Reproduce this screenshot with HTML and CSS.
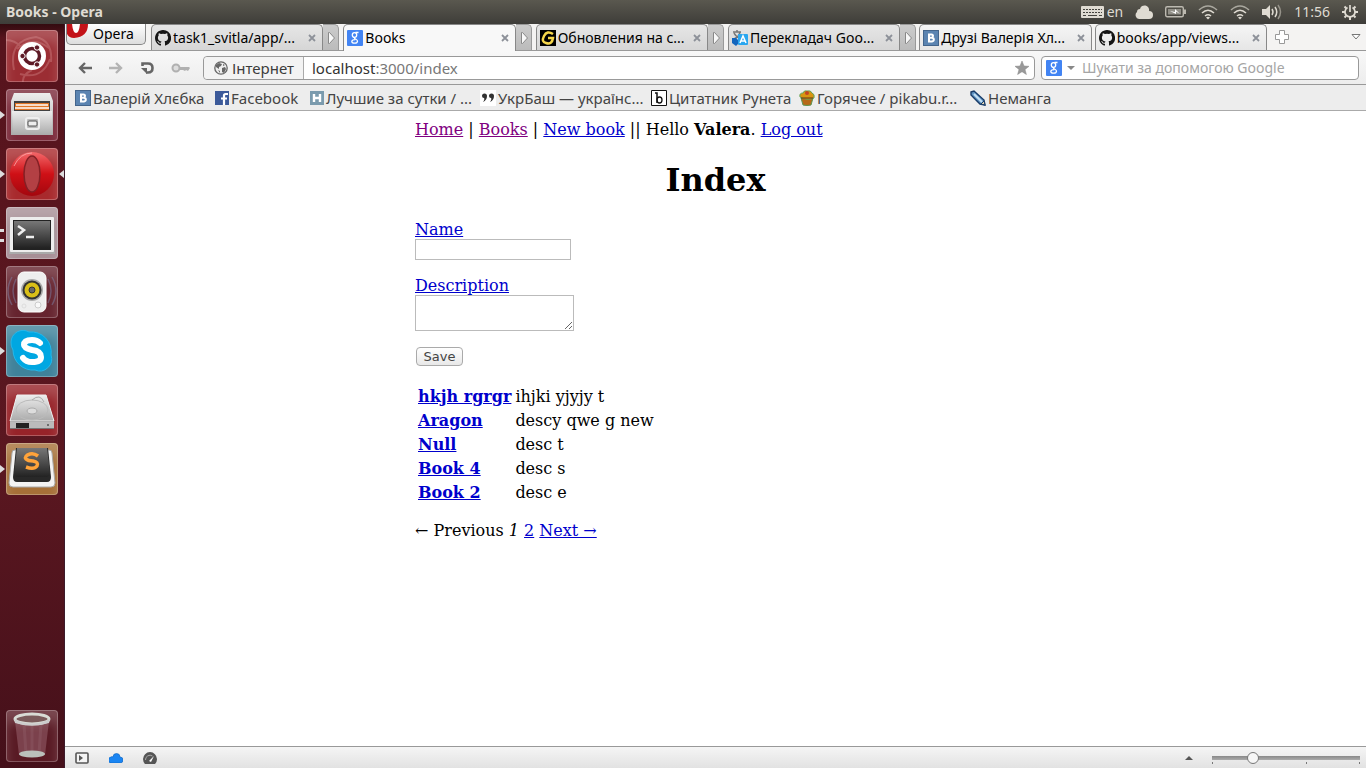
FILE: index.html
```html
<!DOCTYPE html>
<html lang="uk">
<head>
<meta charset="utf-8">
<title>Books</title>
<link rel="stylesheet" href="styles.css">
</head>
<body>
<svg class="defs" width="0" height="0" aria-hidden="true">
  <defs>
    <symbol id="github" viewBox="0 0 16 16"><path fill="#151515" d="M8 0C3.6 0 0 3.6 0 8c0 3.600 2.300 6.600 5.500 7.600.4.1.5-.2.5-.4v-1.500c-2.200.5-2.700-.9-2.700-.9-.4-.9-.9-1.200-.9-1.200-.7-.5.1-.5.1-.5.8.1 1.200.8 1.200.8.7 1.200 1.900.9 2.300.7.1-.5.3-.9.5-1.100C4.700 11.300 2.900 10.600 2.900 7.600c0-.9.300-1.600.8-2.200-.1-.2-.3-1 .1-2.100 0 0 .7-.2 2.200.8a8 8 0 0 1 4 0c1.500-1 2.200-.8 2.200-.8.4 1.100.2 1.900.1 2.100.5.600.8 1.300.8 2.200 0 3-1.900 3.700-3.600 3.900.3.300.5.700.5 1.500v2.200c0 .2.100.5.600.4A8 8 0 0 0 8 0z"/></symbol>
    <symbol id="google" viewBox="0 0 16 16"><rect width="16" height="16" rx="1" fill="#4284f3"/><g fill="none" stroke="#fff" stroke-width="1.300"><ellipse cx="7.500" cy="5" rx="2.200" ry="2.400"/><path d="M8.500 2.500h3M8 7.500c-2 1.200 2.700 1.500 2.500 3.700-.2 2.600-5.600 2.600-5.700.3 0-1.500 1.800-1.900 3.500-1.900"/></g></symbol>
    <symbol id="vk" viewBox="0 0 16 16"><rect x=".5" y=".5" width="15" height="15" fill="#5b84b1" stroke="#43658c"/><path fill="none" stroke="#fff" stroke-width="2" d="M6 4.500v7M5 4.500h3.500q1.500 0 1.500 1.500t-1.500 1.700H6h3q1.800.2 1.800 1.900T9 11.500H5"/></symbol>
    <symbol id="group" viewBox="0 0 16 26"><path d="M5.500 7.500v11h1l5-5.500-5-5.500z" fill="#f8f8f8" stroke="#888"/></symbol>
    <symbol id="close" viewBox="0 0 8 8"><path d="M1 1l6 6M7 1L1 7" stroke="#8d9199" stroke-width="1.800"/></symbol>
    <symbol id="wifi" viewBox="0 0 20 16"><g fill="none" stroke-width="1.600"><path d="M1 6Q10-2 19 6" stroke="#aaa89f"/><path d="M4 9Q10 3.500 16 9M7 12q3-2.500 6 0" stroke="#dfdbd2"/></g><path d="M8 13.500q2-1.600 4 0L10 15.500z" fill="#dfdbd2"/></symbol>
    <linearGradient id="silver" x2="0" y2="1"><stop stop-color="#ededed"/><stop offset="1" stop-color="#aaa"/></linearGradient>
    <linearGradient id="dark" x2="0" y2="1"><stop stop-color="#777"/><stop offset="1" stop-color="#222"/></linearGradient>
    <linearGradient id="red" x2="0" y2="1"><stop stop-color="#f4686a"/><stop offset=".5" stop-color="#cf1016"/><stop offset="1" stop-color="#a3070e"/></linearGradient>
  </defs>
</svg>

<header class="panel">
  <span class="panel-title">Books - Opera</span>
  <div class="indicators">
    <span class="lang"><svg width="23" height="14" viewBox="0 0 23 14"><rect y="1" width="23" height="12" rx="1" fill="#dfdbd2"/><path d="M2 4.500h19M2 7.500h19" stroke="#45443f" stroke-width="1.200" stroke-dasharray="2 1"/><path d="M2 10.500h3m2 0h9m2 0h3" stroke="#45443f" stroke-width="1.200"/></svg>en</span>
    <svg width="18" height="14" viewBox="0 0 18 14"><path fill="#dfdbd2" d="M4 14a4 4 0 0 1-2-7 3 3 0 0 1 3-3 4.500 4.500 0 0 1 9 2 4 4 0 0 1 0 8z"/></svg>
    <svg width="21" height="14" viewBox="0 0 21 14"><rect x=".7" y="1.700" width="17.600" height="10" rx="1.500" fill="none" stroke="#bcb9b0" stroke-width="1.400"/><rect x="3" y="4" width="13" height="5.500" fill="#918f87"/><path d="M19 4.500h2v4.500h-2z" fill="#bcb9b0"/><path d="M5 6l6 3V6.500l4 2.500-5-5v3z" fill="#fff"/></svg>
    <svg width="20" height="16"><use href="#wifi"/></svg>
    <svg width="20" height="16"><use href="#wifi"/></svg>
    <svg width="20" height="16" viewBox="0 0 20 16"><path d="M0 5h4l4-4v14l-4-4H0z" fill="#dfdbd2"/><g fill="none" stroke="#dfdbd2" stroke-width="1.500"><path d="M10 5q2 3 0 6M13 3q3.500 5 0 10"/><path d="M16 1q5 7 0 14" stroke="#96938a"/></g></svg>
    <span class="clock">11:56</span>
    <svg width="16" height="16" viewBox="0 0 16 16"><g fill="none" stroke="#dfdbd2"><path d="M5.500 3.600a5 5 0 1 0 5 0M8 1v7" stroke-width="1.700"/><path d="M2.500 2.500l1.700 1.700M13.500 2.500l-1.700 1.700M0 8h3M16 8h-3M2.500 13.500l1.700-1.700M13.500 13.500l-1.700-1.700M8 13v3" stroke-width="2"/></g></svg>
  </div>
</header>

<div class="desktop">
  <nav class="launcher" aria-label="Launcher">
    <button class="app app-dash" aria-label="Ubuntu"><svg viewBox="0 0 52 52"><g fill="none" stroke="#e3a4a5" stroke-width="2" stroke-opacity=".3"><path d="M8 40Q2 10 30 7q17 4 15 25M14 44Q36 50 44 29M11 19Q27 5 43 18M26 40Q16 45 17 52M0 10Q9 10 15 17"/></g><circle cx="26" cy="26" r="14" fill="#fff"/><circle cx="26" cy="26" r="7.500" fill="none" stroke="#5e1a26" stroke-width="3.500"/><g fill="#5e1a26" stroke="#fff"><circle cx="16.500" cy="26" r="2.700"/><circle cx="31" cy="17.500" r="2.700"/><circle cx="31" cy="34.500" r="2.700"/></g></svg></button>
    <button class="app app-files running" aria-label="Files"><svg viewBox="0 0 52 52"><path d="M8 4h36l3 8v34H5V12z" fill="url(#silver)"/><path d="M8 12h36v11H8z" fill="#414141"/><path d="M9 14h34v7H9z" fill="#df7627"/><path d="M10 16h32M9 19h34" stroke="#fff" stroke-width="1.500"/><path d="M6 22h40v24H7z" fill="url(#silver)"/><rect x="20" y="29" width="13" height="11" rx="2" fill="#bbb" stroke="#eee" stroke-width="2"/><rect x="22" y="32" width="9" height="5" rx="1" fill="#eee" stroke="#555"/></svg></button>
    <button class="app app-opera running active" aria-label="Opera"><svg viewBox="0 0 52 52"><circle cx="26" cy="26" r="22" fill="url(#red)"/><ellipse cx="26" cy="26" rx="8" ry="18" fill="#b34044" stroke="#842025" stroke-width="1.500"/><path d="M8 18Q14 5 26 5" fill="none" stroke="#ffb5b5" opacity=".7"/></svg></button>
    <button class="app app-term running-many" aria-label="Terminal"><svg viewBox="0 0 52 52"><path d="M4 11h44l1 36H3z" fill="#aaa"/><rect x="4" y="10" width="44" height="35" rx="1" fill="#ededed"/><rect x="7" y="13" width="38" height="30" fill="#222"/><rect x="8" y="14" width="36" height="27" fill="url(#dark)"/><path d="M12 19l6 4-6 5M20 30h8" fill="none" stroke="#eee" stroke-width="2.500"/></svg></button>
    <button class="app app-sound" aria-label="Rhythmbox"><svg viewBox="0 0 52 52"><g fill="none" stroke="#8194bf" stroke-opacity=".4" stroke-width="1.500"><path d="M10 13q-6 12 0 24M6 11q-8 14 0 28M42 13q6 12 0 24M46 11q8 14 0 28"/></g><rect x="12" y="6" width="28" height="40" rx="6" fill="#eee" stroke="#fff"/><circle cx="26" cy="24" r="11" fill="#aaa"/><circle cx="26" cy="24" r="9.500" fill="#333"/><circle cx="26" cy="24" r="7.500" fill="#d9bf17"/><circle cx="26" cy="24" r="3" fill="#666" stroke="#333"/><circle cx="32" cy="39" r="3" fill="#f8f8f8" stroke="#ccc"/><circle cx="18" cy="40" r="2" fill="none" stroke="#ddd"/></svg></button>
    <button class="app app-skype running" aria-label="Skype"><svg viewBox="0 0 52 52"><path fill="#00a7e2" stroke="#24b8eb" d="M5 17a12 12 0 0 1 18-10A20 20 0 0 1 45 30a12 12 0 0 1-16 15A20 20 0 0 1 7 25a13 13 0 0 1-2-8z"/><path d="M34 18Q31 15 26 15q-8 0-8 5 0 3 8 5 9 1 9 7 0 5-9 5-6 0-9-4" fill="none" stroke="#fff" stroke-width="6" stroke-linecap="round"/></svg></button>
    <button class="app app-disk" aria-label="Disk"><svg viewBox="0 0 52 52"><path d="M11 11h29l8 26v8H4v-8z" fill="#777"/><path d="M11 11h29l8 26H4z" fill="url(#silver)" stroke="#eee"/><path d="M4 38h44v6H4z" fill="#bbb"/><path d="M10 39h13v5H10z" fill="#222"/><ellipse cx="26" cy="26" rx="16" ry="10" fill="none" stroke="#bbb"/><ellipse cx="26" cy="27" rx="5" ry="3" fill="#ddd" stroke="#aaa"/><path d="M26 16q8-7 12 2" fill="none" stroke="#aaa"/><circle cx="42" cy="41" r="1" fill="#555"/></svg></button>
    <button class="app app-sublime running" aria-label="Sublime Text"><svg viewBox="0 0 52 52"><path d="M6 10q0-3 3-3h34q3 0 3 3l3 30q0 4-4 4H7q-4 0-4-4z" fill="#f3f3f3" stroke="#aaa"/><path d="M10 5h32l3 29q0 5-4 5H11q-4 0-4-5z" fill="#282828"/><path d="M11 5h30l3 25q0 4-4 4H12q-4 0-4-4z" fill="url(#dark)"/><path d="M32 13q-4-3-8-2-6 2-4 5 2 2 7 2 6 1 4 5-3 4-11 1" fill="none" stroke="#ffa33a" stroke-width="3.500"/></svg></button>
    <button class="app app-trash" aria-label="Trash"><svg viewBox="0 0 52 52"><path d="M9 11l4 34q13 4 26 0l4-34z" fill="#d4a9b2" opacity=".28"/><path d="M18 14l2 30M26 15v30M35 14l-2 30" stroke="#fff" opacity=".06" stroke-width="3"/><ellipse cx="26" cy="44" rx="13" ry="3.500" fill="#bbc0bb"/><ellipse cx="26" cy="9" rx="17" ry="5" fill="#7b5b5b" stroke="#d9dcd5" stroke-width="3"/><path d="M8 9q18 9 36 0l-1 4q-17 5-34 0z" fill="#ccc"/></svg></button>
  </nav>

  <div class="browser">
    <div class="tabbar">
      <button class="opera-menu"><svg width="22" height="15" viewBox="0 0 22 15"><path d="M0 0h21q0 13-14 14-5 0-7-4z" fill="#c31319"/><path d="M5 0h8q-1 9-4 9T5 0z" fill="#fff"/></svg>Opera</button>
      <div class="tabs">
        <div class="tab-group"><div class="tab"><svg width="16" height="16"><use href="#github"/></svg><button class="tab-name">task1_svitla/app/...</button><button class="tab-close" aria-label="Close"><svg width="8" height="8"><use href="#close"/></svg></button></div><button class="expand" aria-label="Expand"><svg width="16" height="26"><use href="#group"/></svg></button></div>
        <div class="tab-group"><div class="tab selected"><svg width="16" height="16"><use href="#google"/></svg><button class="tab-name">Books</button><button class="tab-close" aria-label="Close"><svg width="8" height="8"><use href="#close"/></svg></button></div><button class="expand" aria-label="Expand"><svg width="16" height="26"><use href="#group"/></svg></button></div>
        <div class="tab-group"><div class="tab"><svg width="16" height="16" viewBox="0 0 16 16"><path d="M0 0h16v16H0z"/><path d="M13 4Q7 0 4 6t2 7q6 2 7-5H8" fill="none" stroke="#f6d74b" stroke-width="2.500"/></svg><button class="tab-name">Обновления на с...</button><button class="tab-close" aria-label="Close"><svg width="8" height="8"><use href="#close"/></svg></button></div><button class="expand" aria-label="Expand"><svg width="16" height="26"><use href="#group"/></svg></button></div>
        <div class="tab-group"><div class="tab"><svg width="16" height="16" viewBox="0 0 16 16"><path d="M1 2h8M5 0v2M8 2q-1 5-6 7M2 3q2 4 6 5" fill="none" stroke="#777" stroke-width="1.500"/><path d="M0 8h4l4 4-4 4-4-3z" fill="#1265bd"/><rect x="6" y="4" width="10" height="11" rx="1" fill="#2aa6ef"/><path d="M8 13l3-7 3 7M9 11h4" fill="none" stroke="#fff" stroke-width="1.500"/></svg><button class="tab-name">Перекладач Goo...</button><button class="tab-close" aria-label="Close"><svg width="8" height="8"><use href="#close"/></svg></button></div><button class="expand" aria-label="Expand"><svg width="16" height="26"><use href="#group"/></svg></button></div>
        <div class="tab-group single"><div class="tab"><svg width="16" height="16"><use href="#vk"/></svg><button class="tab-name">Друзі Валерія Хл...</button><button class="tab-close" aria-label="Close"><svg width="8" height="8"><use href="#close"/></svg></button></div></div>
        <div class="tab-group single"><div class="tab"><svg width="16" height="16"><use href="#github"/></svg><button class="tab-name">books/app/views...</button><button class="tab-close" aria-label="Close"><svg width="8" height="8"><use href="#close"/></svg></button></div></div>
      </div>
      <button class="plain" aria-label="New tab"><svg width="14" height="14" viewBox="0 0 14 14"><path d="M4.500.5h5v4h4v5h-4v4h-5v-4h-4v-5h4z" fill="#fff" stroke="#999"/></svg></button>
      <button class="plain tab-list" aria-label="Closed tabs"><svg width="10" height="6" viewBox="0 0 10 6"><path d="M1 .5h8L5 5z" fill="#fff" stroke="#777"/></svg></button>
    </div>

    <div class="toolbar">
      <div class="tools">
        <button class="plain" aria-label="Back"><svg width="14" height="12" viewBox="0 0 14 12"><path d="M14 6H2M7 1L2 6l5 5" fill="none" stroke="#666" stroke-width="2.400"/></svg></button>
        <button class="plain" aria-label="Forward"><svg width="14" height="12" viewBox="0 0 14 12"><path d="M0 6h12M7 1l5 5-5 5" fill="none" stroke="#b3b3b3" stroke-width="2.400"/></svg></button>
        <button class="plain" aria-label="Reload"><svg width="14" height="14" viewBox="0 0 14 14"><path d="M2.500 5V2.500H8q4.500 0 4.500 4.500T8 11.500H6" fill="none" stroke="#666" stroke-width="2.600"/><path d="M1 7h6v6z" fill="#666"/></svg></button>
        <button class="plain" aria-label="Password"><svg width="20" height="10" viewBox="0 0 20 10"><circle cx="5" cy="5" r="3.500" fill="#ddd" stroke="#b0b0b0" stroke-width="2"/><path d="M8 4h10l1 1-2 3-2-1-1 1-2-1H8z" fill="#b0b0b0"/></svg></button>
      </div>
      <div class="address">
        <button class="zone"><svg width="14" height="14" viewBox="0 0 14 14"><circle cx="7" cy="7" r="6.200" fill="#eee" stroke="#666" stroke-width="1.300"/><path d="M2 4l3-2 3 1-1 2-2 1v2L2 6zM8 7l3-1 1 2-2 4-2-1zM9 3l2 1-2 1zM4 9l2 1v2z" fill="#666"/></svg>Інтернет</button>
        <a class="url" href="#index"><span class="host">localhost</span>:3000/index</a>
        <button class="plain star" aria-label="Bookmark"><svg width="14" height="14" viewBox="0 0 14 14"><path d="M7 0l2 5 5 .3-4 3.200 1.400 5L7 10.700l-4.400 2.800L4 8.500 0 5.300 5 5z" fill="#999" stroke="#888" stroke-width=".5"/></svg></button>
      </div>
      <div class="search"><svg width="16" height="16"><use href="#google"/></svg><svg width="8" height="4" viewBox="0 0 8 4"><path d="M0 0h8L4 4z" fill="#888"/></svg><input type="search" aria-label="Google" placeholder="Шукати за допомогою Google"></div>
    </div>

    <nav class="bookmarks" aria-label="Bookmarks">
      <a href="#vk-page"><svg width="16" height="16"><use href="#vk"/></svg>Валерій Хлєбка</a>
      <a href="#facebook"><svg width="14" height="14" viewBox="0 0 14 14"><path d="M0 0h14v14H0z" fill="#3c5a9a"/><path d="M9 14V4.500Q9 3 10.500 3H13M6 7.500h6" fill="none" stroke="#fff" stroke-width="2.200"/></svg>Facebook</a>
      <a href="#habr"><svg width="14" height="14" viewBox="0 0 14 14"><path d="M0 0h14v14H0z" fill="#7b9bae"/><path d="M4 3v8M10 3v8M4 7h6" stroke="#fff" stroke-width="2.400"/></svg>Лучшие за сутки / ...</a>
      <a href="#ukrbash"><svg width="16" height="16" viewBox="0 0 16 16"><path d="M0 0h16v16H0z" fill="#fff"/><path d="M2 6a2.300 2.300 0 1 1 5 0q0 4-4 6 2-3 1-4-2 0-2-2zm7 0a2.300 2.300 0 1 1 5 0q0 4-4 6 2-3 1-4-2 0-2-2z" fill="#333"/></svg>УкрБаш — українс...</a>
      <a href="#bash"><svg width="16" height="16" viewBox="0 0 16 16"><path d="M.5.5h15v15H.5z" fill="#fff" stroke="#111"/><path d="M4 3h2v10" fill="none" stroke="#111" stroke-width="1.500"/><ellipse cx="8.500" cy="10" rx="2.500" ry="3" fill="none" stroke="#111" stroke-width="1.300"/></svg>Цитатник Рунета</a>
      <a href="#pikabu"><svg width="16" height="16" viewBox="0 0 16 16"><path d="M2 8h12l-2 7q-4 1-8 0z" fill="#b76917" stroke="#5a9651"/><path d="M1 7Q0 3 4 3q1-3 4-2 4-1 5 2 3 1 2 5-7 3-14-1z" fill="#d79613" stroke="#63a35c"/><circle cx="8" cy="3" r="2" fill="#c44422"/><path d="M2 8h12" stroke="#6b3510"/></svg>Горячее / pikabu.r...</a>
      <a href="#manga"><svg width="16" height="16" viewBox="0 0 16 16"><path d="M1 2l3-1 10 9 1 5-5-1L1 5z" fill="#6195c4" stroke="#173b68" stroke-width="1.400"/><path d="M4 4l8 8" stroke="#c5e1f4" stroke-width="2"/><path d="M11 14l3-3 1 4z" fill="#eedfb8" stroke="#173b68"/></svg>Неманга</a>
    </nav>

    <main class="page">
      <div class="content">
        <div class="site-nav"><a class="visited" href="#home">Home</a> | <a class="visited" href="#books">Books</a> | <a href="#new">New book</a> || Hello <b>Valera</b>. <a href="#logout">Log out</a></div>
        <h1>Index</h1>
        <form>
          <div class="field"><label for="name"><a href="#name">Name</a></label><input id="name" type="text"></div>
          <div class="field"><label for="description"><a href="#description">Description</a></label><textarea id="description"></textarea></div>
          <button class="save" type="button">Save</button>
        </form>
        <table class="books">
          <tr><th scope="row"><a href="#b1">hkjh rgrgr</a></th><td>ihjki yjyjy t</td></tr>
          <tr><th scope="row"><a href="#b2">Aragon</a></th><td>descy qwe g new</td></tr>
          <tr><th scope="row"><a href="#b3">Null</a></th><td>desc t</td></tr>
          <tr><th scope="row"><a href="#b4">Book 4</a></th><td>desc s</td></tr>
          <tr><th scope="row"><a href="#b5">Book 2</a></th><td>desc e</td></tr>
        </table>
        <div class="pagination">← Previous <em>1</em> <a href="#p2">2</a> <a href="#p2">Next →</a></div>
      </div>
    </main>

    <footer class="status">
      <button class="plain" aria-label="Panels"><svg width="14" height="12" viewBox="0 0 14 12"><rect x="1" y="1" width="12" height="10" rx="1" fill="#f4f4f4" stroke="#555" stroke-width="1.600"/><path d="M4 3l4 3-4 3z" fill="#555"/></svg></button>
      <button class="plain" aria-label="Link"><svg width="14" height="10" viewBox="0 0 14 10"><path d="M3 10a3 3 0 0 1-1-6q1-1 2 0a3.500 3.500 0 0 1 7 0 3 3 0 0 1 0 6z" fill="#1a85f2" stroke="#0b62bd" stroke-width=".6"/></svg></button>
      <button class="plain" aria-label="Turbo"><svg width="14" height="12" viewBox="0 0 14 12"><path d="M2 12a7 7 0 1 1 10 0z" fill="#555"/><path d="M2.500 8a4.500 4.500 0 0 1 7-4" fill="none" stroke="#aaa"/><path d="M6 9l5-5-3 6z" fill="#fff"/></svg></button>
      <div class="zoom"><svg width="8" height="4" viewBox="0 0 8 4"><path d="M4 0l4 4H0z" fill="#555"/></svg><input type="range" min="0" max="100" value="26" aria-label="Zoom"></div>
    </footer>
  </div>
</div>
</body>
</html>
```
FILE: styles.css
```css
* { box-sizing: border-box; }
body {
  margin: 0;
  height: 100vh;
  display: flex;
  flex-direction: column;
  overflow: hidden;
  font: 14px/20px "Noto Sans", "Open Sans", sans-serif;
  color: #3c3c3c;
}
button, input, textarea { font: inherit; color: inherit; }
button { padding: 0; border: 0; background: none; }
svg { display: block; flex: none; }
.defs { position: absolute; }

.panel {
  height: 24px;
  flex: none;
  display: flex;
  justify-content: space-between;
  align-items: center;
  padding: 0 8px 0 6px;
  background: linear-gradient(#5a584f, #3e3d39);
  color: #dfdbd2;
}
.panel-title { font-weight: bold; }
.indicators, .lang { display: flex; align-items: center; }
.indicators { gap: 12px; }
.lang { gap: 3px; }

.desktop { flex: 1; display: flex; min-height: 0; }
.launcher {
  width: 65px;
  flex: none;
  display: flex;
  flex-direction: column;
  align-items: flex-start;
  gap: 7px;
  padding: 6px;
  background: linear-gradient(#330b10, #57141d 14px, #5a1720 60%, #45101a);
  border-right: 1px solid #3c1b2b;
}
.app {
  position: relative;
  width: 52px;
  height: 52px;
  border-radius: 4px;
  box-shadow: inset 0 0 0 1px rgba(255, 255, 255, .25), inset 0 12px 12px rgba(255, 255, 255, .2);
}
.app svg { width: 100%; height: 100%; }
.app-dash { background: #9b2d33; }
.app-files { background: #7b2a3a; }
.app-opera { background: #a82a2d; }
.app-term { background: #a78f96; }
.app-sound { background: #66242f; }
.app-skype { background: #3f829a; }
.app-disk { background: #972329; }
.app-sublime { background: #a67038; }
.app-trash { background: #591a24; margin-top: auto; }
.running::before, .active::after {
  content: "";
  position: absolute;
  left: -6px;
  top: 22px;
  border: 4px solid transparent;
  border-left: 5px solid #ddd;
  border-right: 0;
}
.active::after { left: auto; right: -6px; border-left: 0; border-right: 5px solid #ddd; }
.running-many::before {
  content: "";
  position: absolute;
  left: -6px;
  top: 22px;
  width: 4px;
  height: 7px;
  border: solid #ddd;
  border-width: 3px 0;
}

.browser { flex: 1; min-width: 0; display: flex; flex-direction: column; background: #fff; }
.plain { display: flex; align-items: center; justify-content: center; }
.tabbar {
  height: 27px;
  flex: none;
  display: flex;
  align-items: center;
  padding: 0 5px 0 1px;
  background: #f4f3f2;
  border-bottom: 1px solid #999;
  color: #000;
}
.opera-menu {
  width: 80px;
  height: 21px;
  flex: none;
  align-self: flex-start;
  display: flex;
  gap: 4px;
  overflow: hidden;
  border: 1px solid #888;
  border-top: 0;
  border-radius: 0 0 5px 5px;
  background: linear-gradient(#fff, #ddd);
}
.tabs { flex: 0 1 1116px; min-width: 0; display: flex; gap: 4px; margin: 0 8px 0 5px; align-self: stretch; }
.tab-group { flex: 0 1 189px; min-width: 0; display: flex; height: 26px; }
.tab-group.single { flex-basis: 173px; margin-left: -1px; }
.tab {
  flex: 1;
  min-width: 0;
  display: flex;
  align-items: center;
  gap: 2px;
  padding: 0 6px 0 3px;
  border: 1px solid #888;
  border-bottom: 0;
  border-radius: 5px 5px 0 0;
  background: linear-gradient(#e6e6e6, #d6d6d6);
}
.single .tab { background: linear-gradient(#f5f5f5, #e6e6e6); }
.tab.selected { background: #f8f8f8; height: 27px; }
.tab-name { flex: 1; min-width: 0; overflow: hidden; white-space: nowrap; text-align: left; }
.expand {
  width: 16px;
  flex: none;
  border: 1px solid #999;
  border-width: 1px 1px 0 0;
  border-radius: 0 5px 0 0;
  background: linear-gradient(#ccc, #bbb);
}
.tab-list { margin-left: auto; }

.toolbar {
  height: 34px;
  flex: none;
  display: flex;
  align-items: center;
  gap: 6px;
  padding: 0 7px 0 13px;
  background: linear-gradient(#f8f8f8, #ededed);
  border-bottom: 1px solid #999;
}
.tools { display: flex; gap: 17px; width: 119px; }
.address, .search {
  height: 24px;
  display: flex;
  align-items: center;
  background: #fff;
  border: 1px solid #999;
  border-radius: 4px;
}
.address { flex: 1; font-size: 15px; }
.zone {
  display: flex;
  align-items: center;
  gap: 4px;
  width: 100px;
  height: 100%;
  padding-left: 10px;
  background: #f3f3f3;
  border-right: 1px solid #aaa;
  border-radius: 4px 0 0 4px;
}
.url { flex: 1; padding-left: 8px; color: #777; text-decoration: none; }
.host { color: #333; }
.star { margin-right: 5px; }
.search { width: 318px; gap: 5px; padding-left: 4px; }
.search input { flex: 1; min-width: 0; border: 0; padding: 0 0 0 2px; outline: 0; background: none; }
.search input::placeholder { color: #a5a5a5; }

.bookmarks {
  height: 26px;
  flex: none;
  display: grid;
  grid-template-columns: 140px 95px 170px 171px 148px 171px 1fr;
  align-items: center;
  padding-left: 10px;
  background: #ededed;
  border-bottom: 1px solid #aaa;
  font-size: 15px;
  white-space: nowrap;
}
.bookmarks a { display: flex; align-items: center; gap: 2px; color: #444; text-decoration: none; }

.page { flex: 1; min-height: 0; overflow: hidden; font: 16px/19px "DejaVu Serif", serif; color: #000; }
.content { max-width: 601px; margin: 9px auto; }
.content a { color: #0000cc; }
.content a.visited { color: #800080; }
h1 { margin: 22px 0 21px; font-size: 32px; line-height: 38px; text-align: center; }
.field { margin-bottom: 16px; }
.field label { display: block; }
.field input, .field textarea { display: block; border: 1px solid #bbb; padding: 2px; background: #fff; }
.field input { width: 156px; height: 21px; }
.field textarea { width: 159px; height: 36px; }
form { display: flow-root; }
.save {
  display: block;
  width: 47px;
  height: 19px;
  margin: 1px;
  border: 1px solid #aaa;
  border-radius: 4px;
  background: linear-gradient(#fff, #e8e8e8);
  font: 13px/17px "DejaVu Sans", sans-serif;
  color: #444;
}
.books { margin: 16px 0; border-spacing: 2px; }
.books th, .books td { height: 22px; padding: 1px; text-align: left; }
.pagination { white-space: nowrap; }

.status {
  height: 22px;
  flex: none;
  display: flex;
  align-items: center;
  gap: 20px;
  padding: 0 6px 0 10px;
  border-top: 1px solid #999;
  background: linear-gradient(#f5f5f5, #e2e2e2);
}
.zoom { margin-left: auto; display: flex; align-items: center; gap: 19px; }
.zoom input {
  appearance: none;
  width: 148px;
  height: 12px;
  margin: 0;
  background:
    linear-gradient(#888, #aaa) 0 4px / 100% 4px no-repeat,
    linear-gradient(#777, #777) 0 100% / 1px 2px no-repeat,
    linear-gradient(#777, #777) 64% 100% / 1px 2px no-repeat,
    linear-gradient(#777, #777) 100% 100% / 1px 2px no-repeat;
}
.zoom input::-webkit-slider-thumb {
  appearance: none;
  width: 12px;
  height: 12px;
  border: 1px solid #777;
  border-radius: 50%;
  background: #f6f6f6;
}
```
